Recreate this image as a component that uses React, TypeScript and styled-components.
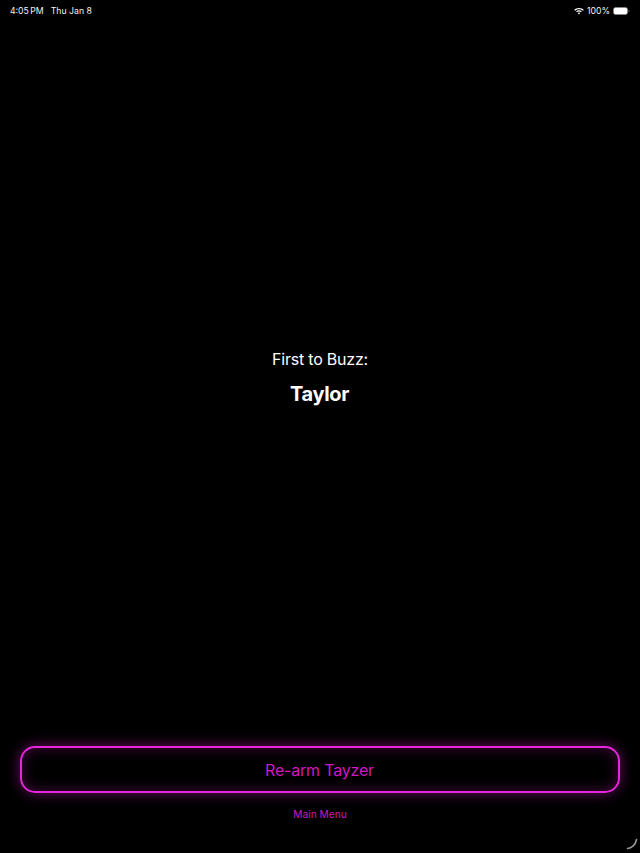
import React from 'react'
import styled, { createGlobalStyle } from 'styled-components'

const NEON = '#e626dc'
const NEON_TEXT = '#cf17c4'

const GlobalStyle = createGlobalStyle`
  html, body {
    margin: 0;
    padding: 0;
    background: #000;
  }
  body {
    font-family: Inter, "Liberation Sans", sans-serif;
  }
`

export default function App(): JSX.Element {
  return (
    <>
      <GlobalStyle />
      <ScreenSCP>
        <StatusBarSCP>
          <StatusGroupSCP>
            <ClockSCP>4:05 PM</ClockSCP>
            <span>Thu Jan 8</span>
          </StatusGroupSCP>
          <StatusGroupSCP $gap={3}>
            <WifiIcon />
            <span>100%</span>
            <BatteryIcon />
          </StatusGroupSCP>
        </StatusBarSCP>

        <ResultAreaSCP>
          <ResultLabelSCP>First to Buzz:</ResultLabelSCP>
          <WinnerNameSCP>Taylor</WinnerNameSCP>
        </ResultAreaSCP>

        <ActionsSCP>
          <RearmButtonSCP>Re-arm Tayzer</RearmButtonSCP>
          <MainMenuLinkSCP>Main Menu</MainMenuLinkSCP>
        </ActionsSCP>

        <CornerHandleSCP width="12" height="12" viewBox="0 0 12 12">
          <path d="M1.5 10.5C5.5 10.2 9.6 7 10.5 1.5" />
        </CornerHandleSCP>
      </ScreenSCP>
    </>
  )
}

function WifiIcon(): JSX.Element {
  return (
    <svg width="10" height="8" viewBox="0 0 10 8" fill="#fff">
      <path d="M5 1C6.9 1 8.6 1.7 9.8 2.9L9 3.8C8 2.8 6.6 2.2 5 2.2S2 2.8 1 3.8L.2 2.9C1.4 1.7 3.1 1 5 1Z" />
      <path d="M5 3.3C6 3.3 7 3.7 7.8 4.4L7 5.3C6.5 4.8 5.8 4.5 5 4.5S3.5 4.8 3 5.3L2.2 4.4C3 3.7 4 3.3 5 3.3Z" />
      <path d="M5 5.5C5.5 5.5 5.9 5.7 6.2 6L5 7.4 3.8 6C4.1 5.7 4.5 5.5 5 5.5Z" />
    </svg>
  )
}

function BatteryIcon(): JSX.Element {
  return (
    <svg width="17" height="8" viewBox="0 0 17 8">
      <rect x="0.5" y="0.5" width="14" height="7" rx="2" fill="#fff" stroke="#888" strokeWidth="0.6" />
      <path d="M15.6 2.7C16.2 2.9 16.5 3.4 16.5 4S16.2 5.1 15.6 5.3Z" fill="#777" />
    </svg>
  )
}

const ScreenSCP = styled.div`
  position: relative;
  display: flex;
  flex-direction: column;
  width: 640px;
  height: 853px;
  overflow: hidden;
  background: #000;
`

const StatusBarSCP = styled.div`
  display: flex;
  justify-content: space-between;
  align-items: center;
  height: 21px;
  padding: 0 10px;
  color: #f2f2f2;
  font-size: 8.7px;
  font-weight: 400;
`

const StatusGroupSCP = styled.div<{ $gap?: number }>`
  display: flex;
  align-items: center;
  gap: ${props => props.$gap ?? 7}px;
`

const ClockSCP = styled.span`
  word-spacing: -1px;
`

const ResultAreaSCP = styled.div`
  flex: 1;
  display: flex;
  flex-direction: column;
  align-items: center;
  padding-top: 327px;
  color: #fff;
`

const ResultLabelSCP = styled.div`
  font-size: 16px;
  line-height: 22px;
  letter-spacing: -0.22px;
`

const WinnerNameSCP = styled.div`
  margin: 11px 1px 0 0;
  font-size: 20px;
  line-height: 26px;
  font-weight: 700;
  letter-spacing: -0.35px;
`

const ActionsSCP = styled.div`
  display: flex;
  flex-direction: column;
  align-items: center;
  padding: 0 20px 32px;
`

const RearmButtonSCP = styled.button`
  box-sizing: border-box;
  width: 600px;
  height: 47px;
  padding: 0 1px 0 0;
  background: transparent;
  border: 2px solid ${NEON};
  border-radius: 15px;
  box-shadow: 0 0 14px rgba(227, 28, 216, 0.45), inset 0 0 14px rgba(227, 28, 216, 0.3);
  color: ${NEON_TEXT};
  font-family: inherit;
  font-size: 16px;
  letter-spacing: -0.2px;
`

const MainMenuLinkSCP = styled.a`
  margin-top: 14px;
  color: ${NEON_TEXT};
  font-size: 10.2px;
  line-height: 14px;
`

const CornerHandleSCP = styled.svg`
  position: absolute;
  right: 2px;
  bottom: 3px;
  fill: none;
  stroke: #999;
  stroke-width: 1.6;
  stroke-linecap: round;
`
